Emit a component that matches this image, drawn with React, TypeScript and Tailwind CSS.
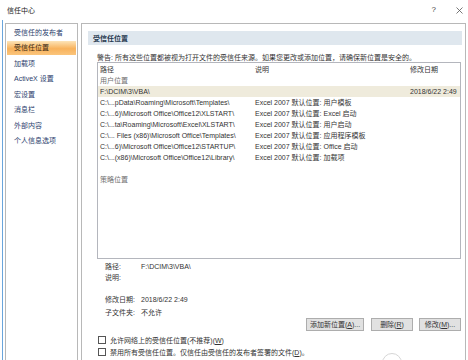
import React from 'react';

const navItems = ['受信任的发布者', '受信任位置', '加载项', 'ActiveX 设置', '宏设置', '消息栏', '外部内容', '个人信息选项'];

const rows: [string, string][] = [
  ['C:\\...pData\\Roaming\\Microsoft\\Templates\\', 'Excel 2007 默认位置: 用户模板'],
  ['C:\\...6)\\Microsoft Office\\Office12\\XLSTART\\', 'Excel 2007 默认位置: Excel 启动'],
  ['C:\\...ta\\Roaming\\Microsoft\\Excel\\XLSTART\\', 'Excel 2007 默认位置: 用户启动'],
  ['C:\\... Files (x86)\\Microsoft Office\\Templates\\', 'Excel 2007 默认位置: 应用程序模板'],
  ['C:\\...6)\\Microsoft Office\\Office12\\STARTUP\\', 'Excel 2007 默认位置: Office 启动'],
  ['C:\\...(x86)\\Microsoft Office\\Office12\\Library\\', 'Excel 2007 默认位置: 加载项'],
];

const Row: React.FC<{ a: string; b?: string; c?: string; sel?: boolean; muted?: boolean }> = ({ a, b, c, sel, muted }) => (
  <div className={`flex h-[11px] items-center whitespace-nowrap ${sel ? 'bg-[#efebdc]' : ''} ${muted ? 'text-[#6f6f6f]' : ''}`}>
    <div className="w-[157px] pl-[2px]">{a}</div>
    <div className="w-[155px]">{b}</div>
    <div className="flex-1">{c}</div>
  </div>
);

const Btn: React.FC<{ children: React.ReactNode; w: string }> = ({ children, w }) => (
  <div className={`${w} h-[13px] flex items-center justify-center bg-[#e1e1e1] border border-[#adadad] text-[#333]`}>{children}</div>
);

const Check: React.FC<{ children: React.ReactNode }> = ({ children }) => (
  <div className="flex h-[12px] items-center pl-[16px] gap-[4px] whitespace-nowrap">
    <div className="w-[8px] h-[8px] border border-[#555] bg-white" />
    <span>{children}</span>
  </div>
);

export default function App() {
  return (
    <div className="relative w-[468px] h-[360px] overflow-hidden bg-white text-[7px] leading-none text-[#333] font-['Liberation_Sans','Noto_Sans_CJK_SC',sans-serif]">
      {/* title bar */}
      <div className="h-[20px] flex items-center justify-between">
        <span className="pl-[7px] text-[#222]">信任中心</span>
        <div className="flex items-center gap-[20px] pr-[5px] text-[#444]">
          <span className="text-[8px]">?</span>
          <svg width="7" height="7" viewBox="0 0 7 7">
            <path d="M0.5 0.5 L6.5 6.5 M6.5 0.5 L0.5 6.5" stroke="#555" strokeWidth="0.8" />
          </svg>
        </div>
      </div>

      <div className="flex h-[345px] ml-[2px] border-l border-[#6aa5dc] pl-[2px] gap-[3px]">
        {/* nav */}
        <div className="mt-[3px] w-[73px] border border-b-0 border-[#b8b8b8] px-[1px] pt-[0.5px]">
          {navItems.map((n, i) => (
            <div key={n} className="h-[15.5px] py-[1px]">
              <div
                className={`h-full flex items-center pl-[7px] whitespace-nowrap ${
                  i === 1
                    ? 'bg-[linear-gradient(#fde4b8,#f8b25c_55%,#fbc57c)] text-[#3a2a14]'
                    : 'text-[#2e3f6e]'
                }`}
              >
                {n}
              </div>
            </div>
          ))}
        </div>

        {/* main */}
        <div className="mt-[3px] w-[385px] border border-b-0 border-[#b8b8b8]">
          <div className="mt-[7px] ml-[6px] mr-[3px] h-[14px] bg-[#dfe7ee] flex items-center pl-[5px] font-bold text-[#24364d]">
            受信任位置
          </div>
          <div className="mt-[7px] ml-[15px] h-[10px] flex items-center whitespace-nowrap">
            警告: 所有这些位置都被视为打开文件的受信任来源。如果您更改或添加位置，请确保新位置是安全的。
          </div>
          <div className="ml-[15px] w-[364px] h-[197px] border border-[#b4b6bd] pt-[1px]">
            <Row a="路径" b="说明" c="修改日期" />
            <Row a="用户位置" muted />
            <Row a="F:\DCIM\3\VBA\" c="2018/6/22 2:49" sel />
            {rows.map(([a, b]) => (
              <Row key={a} a={a} b={b} />
            ))}
            <div className="mt-[11px]">
              <Row a="策略位置" muted />
            </div>
          </div>

          <div className="pl-[23px]">
            <div className="mt-[2px] h-[11px] flex items-center">
              <span className="w-[36px]">路径:</span>
              <span>F:\DCIM\3\VBA\</span>
            </div>
            <div className="h-[11px] flex items-center">
              <span className="w-[36px]">说明:</span>
            </div>
            <div className="mt-[10px] h-[12px] flex items-center">
              <span className="w-[36px]">修改日期:</span>
              <span>2018/6/22 2:49</span>
            </div>
            <div className="mt-[1px] h-[12px] flex items-center">
              <span className="w-[36px]">子文件夹:</span>
              <span>不允许</span>
            </div>
          </div>

          <div className="flex justify-end gap-[6px] mr-[4px]">
            <Btn w="w-[58px]">添加新位置(<u>A</u>)...</Btn>
            <div className="ml-[1px]">
              <Btn w="w-[42px]">删除(<u>R</u>)</Btn>
            </div>
            <Btn w="w-[42px]">修改(<u>M</u>)...</Btn>
          </div>

          <div className="mt-[3px]">
            <Check>允许网络上的受信任位置(不推荐)(<u>W</u>)</Check>
            <Check>禁用所有受信任位置。仅信任由受信任的发布者签署的文件(<u>D</u>)。</Check>
          </div>
        </div>
      </div>

      {/* faint watermark */}
      <div className="absolute left-[382px] top-[353px] w-[20px] h-[20px] rounded-full border border-[#d6d6d6]" />
    </div>
  );
}
